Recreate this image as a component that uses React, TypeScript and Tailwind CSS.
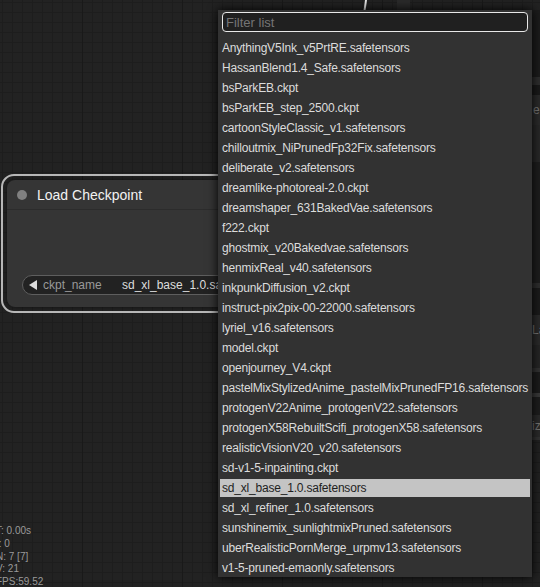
const models = [
  'AnythingV5Ink_v5PrtRE.safetensors',
  'HassanBlend1.4_Safe.safetensors',
  'bsParkEB.ckpt',
  'bsParkEB_step_2500.ckpt',
  'cartoonStyleClassic_v1.safetensors',
  'chilloutmix_NiPrunedFp32Fix.safetensors',
  'deliberate_v2.safetensors',
  'dreamlike-photoreal-2.0.ckpt',
  'dreamshaper_631BakedVae.safetensors',
  'f222.ckpt',
  'ghostmix_v20Bakedvae.safetensors',
  'henmixReal_v40.safetensors',
  'inkpunkDiffusion_v2.ckpt',
  'instruct-pix2pix-00-22000.safetensors',
  'lyriel_v16.safetensors',
  'model.ckpt',
  'openjourney_V4.ckpt',
  'pastelMixStylizedAnime_pastelMixPrunedFP16.safetensors',
  'protogenV22Anime_protogenV22.safetensors',
  'protogenX58RebuiltScifi_protogenX58.safetensors',
  'realisticVisionV20_v20.safetensors',
  'sd-v1-5-inpainting.ckpt',
  'sd_xl_base_1.0.safetensors',
  'sd_xl_refiner_1.0.safetensors',
  'sunshinemix_sunlightmixPruned.safetensors',
  'uberRealisticPornMerge_urpmv13.safetensors',
  'v1-5-pruned-emaonly.safetensors',
]

const selected = 'sd_xl_base_1.0.safetensors'

function RightNode() {
  // node that sits behind the menu, only a sliver shows
  return (
    <div className="absolute left-[532px] top-[10px] flex w-[8px] flex-col overflow-hidden text-[12px] text-[#777]">
      <div className="h-[67px] bg-[#1c1c1c]" />
      <div className="h-[8px] bg-[#2e2e2e]" />
      <div className="h-[10px] bg-[#1a1a1a]" />
      <div className="h-[30px] bg-[#2b2b2b] pl-[1px] leading-[30px]">e</div>
      <div className="h-[37px] bg-[#282828]" />
      <div className="h-[121px] bg-[#1e1e1e]" />
      <div className="h-[5px] bg-[#2e2e2e]" />
      <div className="h-[27px] bg-[#1b1b1b]" />
      <div className="h-[30px] whitespace-nowrap bg-[#2b2b2b] leading-[30px]">La</div>
      <div className="h-[23px] bg-[#262626]" />
      <div className="h-[4px] bg-[#333]" />
      <div className="h-[21px] bg-[#1c1c1c]" />
      <div className="h-[4px] bg-[#3a3a3a]" />
      <div className="h-[18px] bg-[#1e1e1e]" />
      <div className="h-[22px] whitespace-nowrap bg-[#2b2b2b] leading-[22px]">iz</div>
      <div className="h-[3px] bg-[#333]" />
    </div>
  )
}

export default function App() {
  return (
    <div className="relative h-[587px] w-[540px] overflow-hidden bg-[#222] font-['Liberation_Sans',Arial,sans-serif] [background-image:linear-gradient(to_right,#191919_1px,transparent_1px),linear-gradient(to_right,#1d1d1d_1px,transparent_1px),linear-gradient(to_bottom,#1d1d1d_1px,transparent_1px)] [background-position:82px_0,2px_0,0_2px] [background-size:100px_100px,10px_10px,10px_10px]">
      {/* link wire */}
      <svg className="absolute left-[358px] top-0" width="14" height="14" viewBox="0 0 14 14">
        <path d="M8 0 C7.6 4 6.8 8 6 14" stroke="#e8e8e8" strokeWidth="2" fill="none" />
      </svg>
      <div className="absolute left-[397px] top-0 h-[10px] w-[13px] bg-[#2a2a2a]" />

      <RightNode />

      {/* Load Checkpoint node */}
      <div className="absolute left-[1px] top-[174px] rounded-[13px] border-2 border-[#b8b8b8] p-[4px]">
        <div className="w-[300px] overflow-hidden rounded-[8px] bg-[#353535] shadow-[0_0_4px_rgba(0,0,0,0.5)]">
          <div className="flex h-[30px] items-center gap-[10px] border-b border-[#2c2c2c] pl-[10px] pt-[1px]">
            <div className="h-[10px] w-[10px] rounded-full bg-[#808080]" />
            <span className="text-[14px] text-[#f2f2f2]">Load Checkpoint</span>
          </div>
          <div className="h-[97px] pt-[65px]">
            <div className="ml-[15px] flex h-[20px] items-center whitespace-nowrap rounded-l-full border border-[#5e5e5e] bg-[#222] pl-[6px] text-[12px]">
              <svg width="8" height="10" viewBox="0 0 8 10">
                <path d="M8 0 L0 5 L8 10 Z" fill="#dddddd" />
              </svg>
              <span className="ml-[6px] w-[79px] text-[#999]">ckpt_name</span>
              <span className="text-[#ddd]">{selected}</span>
            </div>
          </div>
        </div>
      </div>

      {/* combo filter menu */}
      <div className="absolute left-[218px] top-[10px] w-[314px] bg-[#323232] pt-[2px] text-[12px] tracking-[-0.2px] shadow-[0_0_10px_#000]">
        <input
          readOnly
          placeholder="Filter list"
          className="mx-[4px] block h-[20px] w-[306px] rounded-[4px] border border-[#e8e8e8] bg-[#202020] pl-[3px] text-[13px] tracking-normal text-[#ddd] outline-none placeholder:text-[#757575]"
        />
        <div className="mt-[7px] flex flex-col gap-[2px]">
          {models.map(m => (
            <div
              key={m}
              className={
                m === selected
                  ? 'mx-[2px] h-[18px] whitespace-nowrap bg-[#c4c4c4] pl-[2px] leading-[18px] text-[#1e1e1e]'
                  : 'mx-[2px] h-[18px] whitespace-nowrap pl-[2px] leading-[18px] text-[#dcdcdc]'
              }
            >
              {m}
            </div>
          ))}
        </div>
      </div>

      {/* canvas info */}
      <div className="absolute left-[-4px] top-[525px] text-[10px] leading-[12.75px] text-[#9a9a9a]">
        <div>T: 0.00s</div>
        <div>I: 0</div>
        <div>N: 7 [7]</div>
        <div>V: 21</div>
        <div>FPS:59.52</div>
      </div>
    </div>
  )
}
